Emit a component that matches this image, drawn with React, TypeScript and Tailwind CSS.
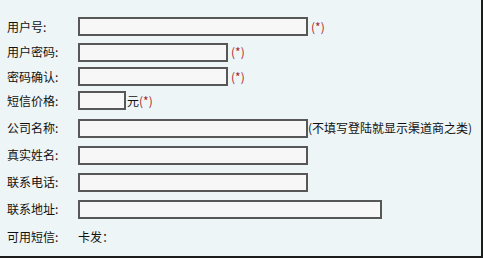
const rows = [
  { label: "用户号:", w: "w-[230px]", h: "h-[25px]", after: "star" },
  { label: "用户密码:", w: "w-[150px]", h: "h-[26px]", after: "star" },
  { label: "密码确认:", w: "w-[150px]", h: "h-[23px]", after: "star" },
  { label: "短信价格:", w: "w-[48px]", h: "h-[25px]", after: "yuan" },
  { label: "公司名称:", w: "w-[230px]", h: "h-[30px]", after: "note" },
  { label: "真实姓名:", w: "w-[230px]", h: "h-[24px]", after: "" },
  { label: "联系电话:", w: "w-[230px]", h: "h-[30px]", after: "" },
  { label: "联系地址:", w: "w-[304px]", h: "h-[24px]", after: "" },
];

function Star() {
  return <span className="text-[#a8292f] text-[12px] leading-none">(*)</span>;
}

export default function App() {
  return (
    <div
      className="w-[483px] h-[258px] bg-[#eef5f7] border-r-2 border-b-2 border-[#1c1c1c] pt-[14px] text-[12px] text-[#111] overflow-hidden"
      style={{ fontFamily: '"Noto Sans CJK SC", "Noto Sans", sans-serif' }}
    >
      {rows.map((r) => (
        <div key={r.label} className={`flex items-center whitespace-nowrap ${r.h}`}>
          <div className="w-[78px] shrink-0 pl-[7px] leading-none">{r.label}</div>
          <input
            className={`${r.w} shrink-0 h-[19px] bg-[#f7f7f7] border-2 border-[#575757] outline-none`}
          />
          {r.after === "star" && (
            <span className="ml-[3px]">
              <Star />
            </span>
          )}
          {r.after === "yuan" && (
            <span className="flex items-center leading-none ml-[1px]">
              元<Star />
            </span>
          )}
          {r.after === "note" && (
            <span className="text-[12px] leading-none">(不填写登陆就显示渠道商之类)</span>
          )}
        </div>
      ))}
      <div className="flex items-center h-[32px]">
        <div className="w-[78px] shrink-0 pl-[7px] leading-none">可用短信:</div>
        <span className="leading-none">卡发：</span>
      </div>
    </div>
  );
}
